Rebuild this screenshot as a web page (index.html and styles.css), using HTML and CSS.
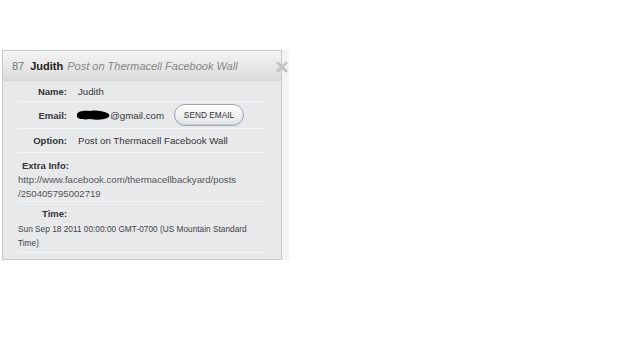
FILE: index.html
```html
<!DOCTYPE html>
<html lang="en">
<head>
    <meta charset="UTF-8">
    <meta name="viewport" content="width=device-width, initial-scale=1.0">
    <title>Lead 87</title>
    <link rel="stylesheet" href="styles.css">
</head>
<body>
    <div class="panel">
        <div class="panel-head">
            <span class="lead-id">87</span>
            <span class="lead-name">Judith</span>
            <span class="lead-source">Post on Thermacell Facebook Wall</span>
            <svg class="close" width="12" height="12" viewBox="0 0 12 12">
                <path d="M2 2 L10 10 M10 2 L2 10" stroke="#c4c4c4" stroke-width="3" stroke-linecap="round"/>
            </svg>
        </div>

        <div class="panel-body">
            <div class="row">
                <span class="label">Name:</span>
                <span class="value">Judith</span>
            </div>
            <div class="row row-email">
                <span class="label">Email:</span>
                <span class="value email">
                    <svg class="redact" width="34" height="12" viewBox="0 0 34 12">
                        <path d="M1 5 C2 2 8 1 14 2 C20 1 27 2 31 4 C34 5 34 8 31 9 C27 11 20 11 14 10 C8 11 2 10 1 8 Z" fill="#000"/>
                    </svg>@gmail.com
                    <button class="send-btn">SEND EMAIL</button>
                </span>
            </div>
            <div class="row">
                <span class="label">Option:</span>
                <span class="value">Post on Thermacell Facebook Wall</span>
            </div>
            <div class="block block-extra">
                <div class="block-label">Extra Info:</div>
                <div class="block-text link">http://www.facebook.com/thermacellbackyard/posts<wbr>/250405795002719</div>
            </div>
            <div class="block block-time">
                <div class="block-label">Time:</div>
                <div class="block-text small">Sun Sep 18 2011 00:00:00 GMT-0700 (US Mountain Standard Time)</div>
            </div>
        </div>
    </div>
</body>
</html>
```

FILE: styles.css
```css
* {
    margin: 0;
    padding: 0;
    box-sizing: border-box;
}

body {
    background: #fff;
    font-family: "Liberation Sans", Arial, sans-serif;
    color: #333;
}

.panel {
    position: relative;
    width: 280px;
    margin: 50px 0 0 2px;
    border: 1px solid #c6c7c9;
    background: #e8e9eb;
    box-shadow: 7px 0 0 #f2f3f5;
}

.panel-head {
    display: flex;
    align-items: center;
    height: 30px;
    padding: 0 9px;
    background: linear-gradient(#f4f4f4, #dcdcdc);
    border-bottom: 1px solid #d4d4d4;
    font-size: 11px;
}

.lead-id {
    color: #777;
    margin-right: 6px;
}

.lead-name {
    font-weight: 700;
    color: #222;
    margin-right: 4px;
}

.lead-source {
    font-style: italic;
    color: #888;
}

.close {
    position: absolute;
    right: -7px;
    top: 10px;
}

.panel-body {
    padding: 0 16px 6px 15px;
}

.row {
    display: grid;
    grid-template-columns: 49px 1fr;
    column-gap: 11px;
    align-items: center;
    height: 21px;
    border-bottom: 1px solid #f3f4f5;
}

.row-email {
    height: 27px;
}

.row-email + .row {
    height: 24px;
}

.label {
    text-align: right;
    font-weight: 700;
    font-size: 9.5px;
    color: #333;
}

.value {
    font-size: 9.7px;
    color: #333;
}

.email {
    display: flex;
    align-items: center;
}

.redact {
    margin-left: -2px;
}

.send-btn {
    margin-left: 10px;
    width: 70px;
    height: 22px;
    border: 1px solid #9ea6b6;
    border-radius: 11px;
    background: linear-gradient(#ffffff, #e2e3e6);
    box-shadow: inset 0 -1px 1px rgba(0, 0, 0, 0.08);
    font-family: "Liberation Sans", Arial, sans-serif;
    font-size: 8.3px;
    color: #333;
}

.block {
    border-bottom: 1px solid #f3f4f5;
}

.block-extra {
    padding: 6px 0 0;
    height: 49px;
}

.block-time {
    padding: 5px 0 0;
    height: 51px;
}

.block-label {
    font-weight: 700;
    font-size: 9.5px;
    line-height: 14px;
    color: #333;
}

.block-extra .block-label {
    padding-left: 4px;
}

.block-time .block-label {
    padding-left: 24px;
}

.block-text {
    font-size: 9.6px;
    line-height: 14px;
    color: #555;
}

.block-text.small {
    font-size: 8.3px;
    line-height: 14px;
    color: #444;
    padding-top: 1px;
}
```
